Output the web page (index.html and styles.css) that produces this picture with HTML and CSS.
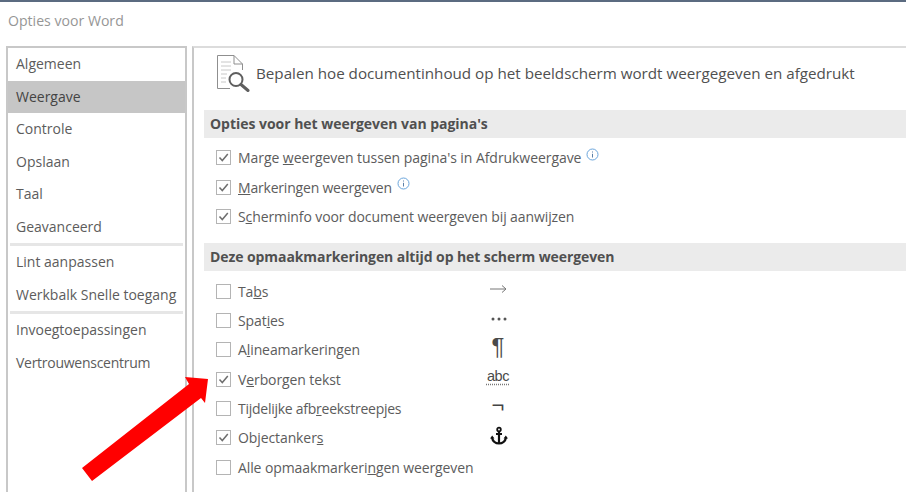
FILE: index.html
```html
<!DOCTYPE html>
<html lang="nl">
<head>
<meta charset="utf-8">
<title>Opties voor Word</title>
<link rel="stylesheet" href="styles.css">
</head>
<body>
<div class="window">
  <header class="titlebar">Opties voor Word</header>
  <div class="main">
    <nav class="sidebar">
      <div class="nav-item">Algemeen</div>
      <div class="nav-item selected">Weergave</div>
      <div class="nav-item">Controle</div>
      <div class="nav-item">Opslaan</div>
      <div class="nav-item">Taal</div>
      <div class="nav-item">Geavanceerd</div>
      <div class="nav-sep"></div>
      <div class="nav-item">Lint aanpassen</div>
      <div class="nav-item">Werkbalk Snelle toegang</div>
      <div class="nav-sep"></div>
      <div class="nav-item">Invoegtoepassingen</div>
      <div class="nav-item narrow">Vertrouwenscentrum</div>
    </nav>
    <section class="panel">
      <div class="intro">
        <svg class="doc-icon" width="34" height="38" viewBox="0 0 34 38">
          <path d="M1.5 1.5H18L26.5 10V16M18 1.5V10H26.5M1.5 1.5V34.5H14" fill="#fff" stroke="#8f8f8f" stroke-width="1"/>
          <path d="M5 8H15M5 12H15M5 16H15M5 20H11M5 24H10M5 28H10" stroke="#c8c8c8" stroke-width="1" fill="none"/>
          <circle cx="20" cy="25.5" r="6.5" fill="#fff" stroke="#5f5f5f" stroke-width="2"/>
          <path d="M25 30.5L32 36.5" stroke="#5f5f5f" stroke-width="3" stroke-linecap="round"/>
        </svg>
        <span class="intro-text">Bepalen hoe documentinhoud op het beeldscherm wordt weergegeven en afgedrukt</span>
      </div>
      <h2 class="section-head">Opties voor het weergeven van pagina's</h2>
      <ul class="options first">
        <li class="option"><span class="check on"><svg width="13" height="13" viewBox="0 0 13 13"><path d="M2.5 6.5L5.3 9.6L10.8 3" fill="none" stroke="#6e6e6e" stroke-width="1.5"/></svg></span><span class="label long">Marge <u>w</u>eergeven tussen pagina's in Afdrukweergave</span><svg class="info" width="13" height="13" viewBox="0 0 13 13"><circle cx="6.5" cy="6.5" r="5.5" fill="none" stroke="#6aa5dc"/><path d="M6.5 3.5V4.5M6.5 5.8V9.5" stroke="#5a7fa8"/></svg></li>
        <li class="option"><span class="check on"><svg width="13" height="13" viewBox="0 0 13 13"><path d="M2.5 6.5L5.3 9.6L10.8 3" fill="none" stroke="#6e6e6e" stroke-width="1.5"/></svg></span><span class="label tight"><u>M</u>arkeringen weergeven</span><svg class="info" width="13" height="13" viewBox="0 0 13 13"><circle cx="6.5" cy="6.5" r="5.5" fill="none" stroke="#6aa5dc"/><path d="M6.5 3.5V4.5M6.5 5.8V9.5" stroke="#5a7fa8"/></svg></li>
        <li class="option"><span class="check on"><svg width="13" height="13" viewBox="0 0 13 13"><path d="M2.5 6.5L5.3 9.6L10.8 3" fill="none" stroke="#6e6e6e" stroke-width="1.5"/></svg></span><span class="label">S<u>c</u>herminfo voor document weergeven bij aanwijzen</span></li>
      </ul>
      <h2 class="section-head second">Deze opmaakmarkeringen altijd op het scherm weergeven</h2>
      <ul class="options marks">
        <li class="option"><span class="check"></span><span class="label wide">Ta<u>b</u>s</span><svg class="mark-svg" width="20" height="14" viewBox="0 0 20 14"><path d="M1 7H17M13 3.5L17 7L13 10.5" fill="none" stroke="#777" stroke-width="1"/></svg></li>
        <li class="option"><span class="check"></span><span class="label wide">Spat<u>i</u>es</span><svg class="mark-svg" width="20" height="14" viewBox="0 0 20 14"><circle cx="4" cy="7" r="1.5" fill="#555"/><circle cx="10" cy="7" r="1.5" fill="#555"/><circle cx="16" cy="7" r="1.5" fill="#555"/></svg></li>
        <li class="option"><span class="check"></span><span class="label wide">A<u>l</u>ineamarkeringen</span><span class="mark m-para">¶</span></li>
        <li class="option"><span class="check on"><svg width="13" height="13" viewBox="0 0 13 13"><path d="M2.5 6.5L5.3 9.6L10.8 3" fill="none" stroke="#6e6e6e" stroke-width="1.5"/></svg></span><span class="label wide">V<u>e</u>rborgen tekst</span><span class="mark m-abc">abc</span></li>
        <li class="option"><span class="check"></span><span class="label wide squeeze">Tijdelijke afb<u>r</u>eekstreepjes</span><span class="mark m-not">¬</span></li>
        <li class="option"><span class="check on"><svg width="13" height="13" viewBox="0 0 13 13"><path d="M2.5 6.5L5.3 9.6L10.8 3" fill="none" stroke="#6e6e6e" stroke-width="1.5"/></svg></span><span class="label wide">Objectanker<u>s</u></span><svg class="mark-svg anchor" width="20" height="20" viewBox="0 0 20 20"><circle cx="10" cy="3.5" r="1.8" fill="none" stroke="#111" stroke-width="1.8"/><path d="M10 5.5V18M7 8H13M3 11.5C3.5 15 6.5 17.5 10 17.5C13.5 17.5 16.5 15 17 11.5" fill="none" stroke="#111" stroke-width="2.2"/><path d="M1 12.5L3.2 9.5L5.4 12.5ZM14.6 12.5L16.8 9.5L19 12.5Z" fill="#111"/></svg></li>
        <li class="option"><span class="check"></span><span class="label wide">Alle opmaakmarkeri<u>n</u>gen weergeven</span></li>
      </ul>
    </section>
  </div>
  <svg class="red-arrow" width="913" height="492" viewBox="0 0 913 492">
    <polygon points="208,379 185,377 189,384 82,468 92,481 201,398 205,403" fill="#ff0000"/>
  </svg>
</div>
</body>
</html>
```

FILE: styles.css
```css
* { box-sizing: border-box; }
html, body { margin: 0; padding: 0; background: #fff; }
body { width: 913px; height: 492px; overflow: hidden; font-family: "Open Sans", "Noto Sans", sans-serif; color: #5c5c5c; }
.window { position: relative; width: 906px; height: 492px; border-top: 2px solid #5b6b80; }
.titlebar { height: 44px; padding: 10px 0 0 8px; font-size: 14.1px; line-height: 18px; color: #969696; }
.main { display: flex; gap: 5px; padding-left: 6px; }
.sidebar { width: 181px; height: 450px; border: 2px solid #c8c8c8; border-bottom: none; flex: none; }
.nav-item { height: 32.5px; line-height: 32px; padding-left: 8px; font-size: 14px; white-space: nowrap; }
.nav-item.narrow { letter-spacing: -0.27px; }
.nav-item.selected { background: #c6c6c6; color: #444; }
.nav-sep { height: 3px; margin: 0 2px; background: #e6e6e6; }
.panel { flex: 1; border-left: 2px solid #c8c8c8; border-top: 2px solid #dcdcdc; padding-left: 10px; min-width: 0; }
.intro { display: flex; align-items: center; height: 62px; padding: 0 0 12px 12px; gap: 6px; }
.doc-icon { flex: none; }
.intro-text { font-size: 15.2px; color: #505050; white-space: nowrap; }
.section-head { margin: 0; height: 28px; line-height: 27px; padding-left: 6px; background: #ebebeb; font-size: 14px; font-weight: 700; color: #505050; letter-spacing: -0.03px; }
.section-head.second { margin-top: 12px; letter-spacing: -0.08px; }
.options { list-style: none; margin: 0; padding: 5px 0 0 12px; letter-spacing: -0.1px; }
.marks { padding-top: 5.5px; }
.option { display: flex; align-items: center; height: 29.35px; font-size: 14px; white-space: nowrap; }
.check { flex: none; display: flex; align-items: center; justify-content: center; width: 15px; height: 15px; border: 1px solid #b4b4b4; background: #fff; margin-right: 7px; }
.label.long { letter-spacing: -0.06px; }
.label.tight { letter-spacing: -0.2px; }
.label.squeeze { letter-spacing: -0.26px; }
.label.wide { width: 247px; flex: none; }
.info { margin: -7px 0 0 5px; flex: none; }
.mark { width: 26px; text-align: center; flex: none; font-family: "Liberation Sans", sans-serif; color: #4a4a4a; line-height: 1; letter-spacing: 0; }
.mark-svg { flex: none; margin: -4px 0 0 4px; }
.mark-svg.anchor { margin-top: -3px; }
.m-para { font-size: 24px; margin-top: -5px; }
.m-abc { font-size: 14.5px; margin-top: -6px; text-decoration: underline dotted #777; text-underline-offset: 3px; letter-spacing: -0.4px; }
.m-not { font-size: 22px; margin-top: -6px; color: #444; }
.red-arrow { position: absolute; left: 0; top: -2px; pointer-events: none; }
```
